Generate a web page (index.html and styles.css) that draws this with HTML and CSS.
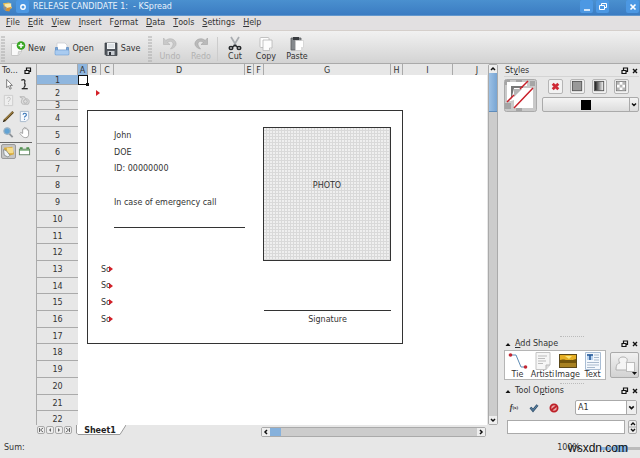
FILE: index.html
```html
<!DOCTYPE html>
<html lang="en">
<head>
    <meta charset="UTF-8">
    <meta name="viewport" content="width=device-width, initial-scale=1.0">
    <title>RELEASE CANDIDATE 1: - KSpread</title>
    <link rel="stylesheet" href="styles.css">
</head>
<body>
    <header class="titlebar">
        <svg class="app-icon" viewBox="0 0 12 12"><path d="M1 2l7-1 3 6-7 3z" fill="#e9bd55"/><path d="M3 3l7-1v5l-6 1z" fill="#f7e9ae"/><path d="M1 5l4 1v5l-3-2z" fill="#8a9096"/><path d="M5 7l5-1-2 5-4-1z" fill="#d9902e"/></svg>
        <button class="win-button" aria-label="Sticky"><svg viewBox="0 0 12 12"><circle cx="6" cy="6" r="2.2" fill="none" stroke="#fff" stroke-width="1.4"/></svg></button>
        <h1 class="window-title">RELEASE CANDIDATE 1:&nbsp; - KSpread</h1>
        <button class="win-button" aria-label="Minimize"><svg viewBox="0 0 12 12"><path d="M3 9h6" stroke="#fff" stroke-width="1.5"/></svg></button>
        <button class="win-button" aria-label="Restore"><svg viewBox="0 0 12 12"><path d="M4.500 4.500v-2h5v4h-2M2.500 4.500h5v4h-5z" fill="none" stroke="#fff"/></svg></button>
        <button class="win-button close" aria-label="Close"><svg viewBox="0 0 12 12"><path d="M3.500 3.500l5 5M8.500 3.500l-5 5" stroke="#fff" stroke-width="1.700"/></svg></button>
    </header>

    <nav class="menubar">
        <button><u>F</u>ile</button>
        <button><u>E</u>dit</button>
        <button><u>V</u>iew</button>
        <button><u>I</u>nsert</button>
        <button>F<u>o</u>rmat</button>
        <button><u>D</u>ata</button>
        <button><u>T</u>ools</button>
        <button><u>S</u>ettings</button>
        <button><u>H</u>elp</button>
    </nav>

    <div class="toolbar">
        <span class="grip"></span>
        <div class="file-tools">
            <button><svg viewBox="0 0 16 16"><path d="M1.500 2.500h10v8l-3 4h-7z" fill="#fafafa" stroke="#c8c8c8"/><path d="M8 14l.5-3.500H12" fill="#ddd" stroke="#bbb" stroke-width=".6"/><circle cx="11" cy="4.500" r="4.300" fill="#35a520"/><path d="M11 2v5M8.500 4.500h5" stroke="#fff" stroke-width="1.500"/></svg>New</button>
            <button><svg viewBox="0 0 16 16"><path d="M3 2h8l2 2v5H3z" fill="#fff" stroke="#c5c9cf" stroke-width=".7"/><path d="M1.500 6.500h2v3h9v-3h2v7h-13z" fill="#77a7dc" stroke="#5585bd" stroke-width=".7"/><rect x="1" y="9" width="14" height="5" rx="1" fill="#a9cbf0" stroke="#6f9fd5" stroke-width=".6"/></svg>Open</button>
            <button><svg viewBox="0 0 16 16"><path d="M2 2h12v12.500H3L2 13.500z" fill="#51565d" stroke="#353a40" stroke-width=".7"/><rect x="4" y="2" width="8" height="6" fill="#f2f4f6"/><path d="M5 4h6M5 6h6" stroke="#b8bec5" stroke-width=".7"/><rect x="4.500" y="10" width="7" height="4" fill="#c9cdd2"/><rect x="6" y="11" width="2" height="3" fill="#30343a"/></svg>Save</button>
        </div>
        <span class="grip"></span>
        <div class="edit-tools">
            <button disabled><svg viewBox="0 0 16 16"><path d="M1.500 2v6.500H8L5.500 6.500c3-2.500 6-.5 5.500 2-.3 2-1.500 3-2.500 4.500 4-1 6-3.500 5.500-6C13 2.500 7 1.500 3.800 4.500z" fill="#c9c9c9" stroke="#b3b3b3" stroke-width=".6"/></svg>Undo</button>
            <button disabled><svg viewBox="0 0 16 16"><path d="M14.500 2v6.500H8l2.500-2C7.500 4 4.500 6 5 8.500c.3 2 1.500 3 2.500 4.500C3.500 12 1.500 9.500 2 7c1-4.500 7-5.500 10.200-2.500z" fill="#bababa" stroke="#a3a3a3" stroke-width=".6"/></svg>Redo</button>
            <span class="divider"></span>
            <button><svg viewBox="0 0 16 16"><path d="M4 1l5.500 9M12 1L6.500 10" stroke="#a8acb0" stroke-width="1.700"/><g fill="none" stroke="#24272a" stroke-width="1.500"><ellipse cx="4" cy="12" rx="1.800" ry="1.500"/><ellipse cx="12" cy="12" rx="1.800" ry="1.500"/><path d="M5.500 11L8 9.200l2.500 1.800"/></g></svg>Cut</button>
            <button><svg viewBox="0 0 16 16" fill="#fdfdfd" stroke="#b5b5b5" stroke-width=".8"><rect x="2" y="1.500" width="9" height="10" rx="1"/><path d="M5 4h9v8l-2.500 2.500H5z"/><path d="M11.500 14.500V12H14"/></svg>Copy</button>
            <button><svg viewBox="0 0 16 16"><path d="M2 2h10v12H2z" fill="#85898d" stroke="#5b5e61" stroke-width=".8"/><path d="M4 1h6v3H4z" fill="#393c40"/><path d="M6.500 4.500h8V11L12 14.500H6.500z" fill="#fff" stroke="#ccc" stroke-width=".7"/><path d="M12 14.500V11h2.500" fill="#ddd"/></svg>Paste</button>
        </div>
    </div>

    <main class="workspace">
        <aside class="toolbox">
            <div class="dock-title"><h2>To...</h2><svg viewBox="0 0 8 8"><path d="M2.500 3V1h4v3.500H5M1 3.500h4v3H1z" fill="none" stroke="#111" stroke-width="1.200"/></svg></div>
            <div class="tools">
                <button aria-label="Select"><svg viewBox="0 0 14 14"><path d="M5 1.500v9l2-2 1.500 3.500 1.500-.7L8.500 8h2.700z" fill="#fff" stroke="#777"/></svg></button>
                <button aria-label="Path"><svg viewBox="0 0 14 14"><path d="M3.500 2.500c3-1.500 5-.5 3.500 2.500M7 5c1 2 1 4-1 5.500" fill="none" stroke="#222" stroke-width="1.300"/><path d="M4 11.500h6.500" stroke="#222" stroke-width="1.400"/></svg></button>
                <button aria-label="Help tool" disabled><svg viewBox="0 0 14 14"><path d="M2.500 1.500h9v11h-9z" fill="#eee" stroke="#ccc"/><path d="M5.500 5c0-2 3.500-2 3.500 0S7 6.500 7 8.500M7 10v1" fill="none" stroke="#bbb"/></svg></button>
                <button aria-label="Rotate" disabled><svg viewBox="0 0 14 14" fill="#ddd" stroke="#b2b2b2"><path d="M2 3h5l1 2c4 0 5 3 3 6H6c-3 0-3-4-1-6z"/><circle cx="8" cy="8" r="2"/></svg></button>
                <button aria-label="Pencil"><svg viewBox="0 0 14 14"><path d="M2 12L12 2" stroke="#594218" stroke-width="2.500"/><path d="M3 10.500l8.500-8.500" stroke="#cfae62"/><path d="M1 13l2-2" stroke="#222"/></svg></button>
                <button aria-label="Unknown tool"><svg viewBox="0 0 14 14"><path d="M2.500 1.500h9v8l-3 3h-6z" fill="#f5f9fe" stroke="#a5b7ca"/><path d="M5.500 5c0-2 3.500-2 3.500 0S7 6.500 7 8M7 9.500v1" fill="none" stroke="#3271b5" stroke-width="1.200"/></svg></button>
                <button aria-label="Zoom"><svg viewBox="0 0 14 14"><path d="M7.500 8l4 4" stroke="#8f9499" stroke-width="2"/><circle cx="5.500" cy="5.500" r="3.500" fill="#62a3d4" stroke="#9db2c2" stroke-width="1.300"/></svg></button>
                <button aria-label="Pan"><svg viewBox="0 0 14 14"><path d="M3 7l2 1V3.500c1-1 1.500 0 1.500 0V2c1-1 1.700 0 1.700 0v1c1-1 1.700 0 1.700 0v1.500c1-.6 1.500 0 1.500 0V9c0 2-1 3.500-3 3.500S5 12 2 8z" fill="#fff" stroke="#888" stroke-width=".8"/></svg></button>
            </div>
            <div class="tools cell-tools">
                <button class="active" aria-label="Cell tool"><svg viewBox="0 0 14 14"><path d="M2 3l9-1 2 8-8 2z" fill="#d6a936"/><path d="M5 3h7v6H6z" fill="#f5dc8a"/><path d="M1.500 5l3 1 4 5-2 2-4-2z" fill="#eef2f5" stroke="#6b7376" stroke-width=".7"/></svg></button>
                <button aria-label="Table"><svg viewBox="0 0 14 14"><path d="M2 3.500h3M9 3.500h3" stroke="#4b9349" stroke-width="2"/><rect x="1.500" y="4.500" width="11" height="6" fill="#fff" stroke="#648365"/><path d="M1.500 5.500h11" stroke="#4b9349"/></svg></button>
            </div>
        </aside>

        <section class="document">
            <div class="sheet-row">
                <div class="sheet-view">
                    <table class="sheet">
                        <colgroup>
                            <col class="col-head"><col class="col-a"><col class="col-b"><col class="col-b"><col class="col-d"><col class="col-e"><col class="col-a"><col class="col-g"><col class="col-h"><col class="col-i"><col>
                        </colgroup>
                        <thead>
                            <tr><th></th><th class="current">A</th><th>B</th><th>C</th><th>D</th><th>E</th><th>F</th><th>G</th><th>H</th><th>I</th><th class="col-j">J</th></tr>
                        </thead>
                        <tbody>
                            <tr class="first"><th class="current">1</th><td class="cursor"></td><td colspan="9"></td></tr>
                            <tr class="short"><th>2</th><td></td><td class="more"></td><td colspan="8"></td></tr>
                            <tr class="tiny"><th>3</th><td colspan="10"></td></tr>
                            <tr><th>4</th><td class="line-right"></td><td colspan="7" class="line-top line-right"></td><td colspan="2"></td></tr>
                            <tr><th>5</th><td class="line-right"></td><td colspan="2"></td><td>John</td><td></td><td class="line-right"></td><td rowspan="8" class="photo">PHOTO</td><td class="line-right"></td><td colspan="2"></td></tr>
                            <tr><th>6</th><td class="line-right"></td><td colspan="2"></td><td>DOE</td><td></td><td class="line-right"></td><td class="line-right"></td><td colspan="2"></td></tr>
                            <tr class="short"><th>7</th><td class="line-right"></td><td colspan="2"></td><td>ID: 00000000</td><td></td><td class="line-right"></td><td class="line-right"></td><td colspan="2"></td></tr>
                            <tr><th>8</th><td class="line-right"></td><td colspan="4"></td><td class="line-right"></td><td class="line-right"></td><td colspan="2"></td></tr>
                            <tr><th>9</th><td class="line-right"></td><td colspan="2"></td><td>In case of emergency call</td><td></td><td class="line-right"></td><td class="line-right"></td><td colspan="2"></td></tr>
                            <tr><th>10</th><td class="line-right"></td><td colspan="2"></td><td class="line-bottom"></td><td></td><td class="line-right"></td><td class="line-right"></td><td colspan="2"></td></tr>
                            <tr class="short"><th>11</th><td class="line-right"></td><td colspan="4"></td><td class="line-right"></td><td class="line-right"></td><td colspan="2"></td></tr>
                            <tr><th>12</th><td class="line-right"></td><td colspan="4"></td><td class="line-right"></td><td class="line-right"></td><td colspan="2"></td></tr>
                            <tr><th>13</th><td class="line-right"></td><td></td><td class="more">So</td><td colspan="5" class="line-right"></td><td colspan="2"></td></tr>
                            <tr class="short"><th>14</th><td class="line-right"></td><td></td><td class="more">So</td><td colspan="5" class="line-right"></td><td colspan="2"></td></tr>
                            <tr><th>15</th><td class="line-right"></td><td></td><td class="more">So</td><td colspan="3"></td><td class="line-bottom"></td><td class="line-right"></td><td colspan="2"></td></tr>
                            <tr><th>16</th><td class="line-right"></td><td></td><td class="more">So</td><td colspan="3"></td><td class="signature">Signature</td><td class="line-right"></td><td colspan="2"></td></tr>
                            <tr class="short"><th>17</th><td class="line-right"></td><td colspan="7" class="line-bottom line-right"></td><td colspan="2"></td></tr>
                            <tr><th>18</th><td colspan="10"></td></tr>
                            <tr><th>19</th><td colspan="10"></td></tr>
                            <tr><th>20</th><td colspan="10"></td></tr>
                            <tr class="short"><th>21</th><td colspan="10"></td></tr>
                            <tr><th>22</th><td colspan="10"></td></tr>
                        </tbody>
                    </table>
                </div>
                <div class="scrollbar vertical">
                    <button aria-label="Scroll up"><svg viewBox="0 0 8 8"><path d="M2 5l2-2 2 2" fill="none" stroke="#111" stroke-width="1.500"/></svg></button>
                    <div class="track"><div class="thumb"></div></div>
                    <button aria-label="Scroll down"><svg viewBox="0 0 8 8"><path d="M2 3l2 2 2-2" fill="none" stroke="#111" stroke-width="1.500"/></svg></button>
                </div>
            </div>
            <div class="tab-row">
                <div class="tab-nav">
                    <button aria-label="First sheet"><svg viewBox="0 0 8 8"><path d="M2.500 2v4M6 2L3.500 4 6 6" fill="none" stroke="#666"/></svg></button>
                    <button aria-label="Previous sheet"><svg viewBox="0 0 8 8"><path d="M5 2L3 4l2 2z" fill="#666"/></svg></button>
                    <button aria-label="Next sheet"><svg viewBox="0 0 8 8"><path d="M3 2l2 2-2 2z" fill="#666"/></svg></button>
                    <button aria-label="Last sheet"><svg viewBox="0 0 8 8"><path d="M5.500 2v4M2 2l2.500 2L2 6" fill="none" stroke="#666"/></svg></button>
                </div>
                <button class="sheet-tab"><svg viewBox="0 0 50 12" preserveAspectRatio="none"><path d="M0 0h50l-6 9.500H2L.5 8z" fill="#fff"/><path d="M.5 0v8L2 9.500h42L50 0" fill="none" stroke="#999"/></svg><span>Sheet1</span></button>
                <div class="scrollbar horizontal">
                    <button aria-label="Scroll left"><svg viewBox="0 0 8 8"><path d="M5 2L3 4l2 2" fill="none" stroke="#111" stroke-width="1.500"/></svg></button>
                    <div class="track"><div class="thumb"></div></div>
                    <button aria-label="Scroll right"><svg viewBox="0 0 8 8"><path d="M3 2l2 2-2 2" fill="none" stroke="#111" stroke-width="1.500"/></svg></button>
                </div>
            </div>
        </section>

        <aside class="docks">
            <section class="styles-dock">
                <div class="dock-title"><h2>St<u>y</u>les</h2><svg viewBox="0 0 8 8"><path d="M2.500 3V1h4v3.500H5M1 3.500h4v3H1z" fill="none" stroke="#111" stroke-width="1.200"/></svg><svg viewBox="0 0 8 8"><path d="M2 2l4 4M6 2L2 6" stroke="#111" stroke-width="1.400"/></svg></div>
                <div class="style-body">
                    <svg class="swatch" viewBox="0 0 33 33"><rect x=".5" y=".5" width="32" height="32" rx="2" fill="#c9c9c9" stroke="#aaa"/><path d="M1 1h5v5H1zM12 1h6v3h-6zM1 24h6v6H1zM26 2h5v5h-5zM12 29h6v3h-6z" fill="#a5a5a5"/><path d="M3 3h20v4H7v15H3z" fill="#fff"/><path d="M7 7h12v3h-9v9H7z" fill="#777"/><path d="M10 9h19v20H10v-8l-3 1z" fill="#fff"/><path d="M10 10h8l-8 8z" fill="#b5b5b5"/><path d="M3 23l7-7M16 10l8-8M10 29L29 9" stroke="#c9202a" stroke-width="1.500"/></svg>
                    <div class="style-controls">
                        <div class="fill-buttons">
                            <button aria-label="No fill"><svg viewBox="0 0 14 14"><path d="M4 4l6 6M10 4l-6 6" stroke="#cf2935" stroke-width="3"/></svg></button>
                            <button aria-label="Solid fill"><svg viewBox="0 0 14 14"><rect x="1.500" y="1.500" width="10" height="10" fill="#999" stroke="#555"/></svg></button>
                            <button aria-label="Gradient"><svg viewBox="0 0 14 14"><defs><linearGradient id="fade"><stop offset="0" stop-color="#111"/><stop offset="1" stop-color="#fff"/></linearGradient></defs><rect x="1.500" y="1.500" width="10" height="10" fill="url(#fade)" stroke="#555"/></svg></button>
                            <button aria-label="Pattern"><svg viewBox="0 0 14 14"><rect x="1.500" y="1.500" width="10" height="10" fill="#fff" stroke="#777"/><path d="M2 2h3v3H2zM8 2h3v3H8zM5 5h3v3H5zM2 8h3v3H2zM8 8h3v3H8z" fill="#b5b5b5"/></svg></button>
                        </div>
                        <button class="color-combo" aria-label="Colour"><span class="color"></span><svg viewBox="0 0 8 8"><path d="M2 3l2 2 2-2" fill="none" stroke="#111" stroke-width="1.400"/></svg></button>
                    </div>
                </div>
            </section>

            <div class="lower-docks">
                <span class="splitter"></span>
                <section>
                    <div class="dock-title"><svg viewBox="0 0 8 8"><path d="M1.500 6h5L4 3z" fill="#111"/></svg><h2><u>A</u>dd Shape</h2><svg viewBox="0 0 8 8"><path d="M2.500 3V1h4v3.500H5M1 3.500h4v3H1z" fill="none" stroke="#111" stroke-width="1.200"/></svg><svg viewBox="0 0 8 8"><path d="M2 2l4 4M6 2L2 6" stroke="#111" stroke-width="1.400"/></svg></div>
                    <div class="shape-body">
                        <div class="shapes">
                            <button><svg viewBox="0 0 20 18"><path d="M2 3h6l5 12h5" fill="none" stroke="#5c8bb5"/><circle cx="2.500" cy="3" r="1.800" fill="#c32733"/><circle cx="17.500" cy="15" r="1.800" fill="#c32733"/></svg><span>Tie</span></button>
                            <button><svg viewBox="0 0 20 18"><path d="M3 .5h14V13l-4 4.500H3z" fill="#f6f6f6" stroke="#c4c4c4"/><path d="M5 4h9M5 6.500h7M5 9h8M5 11.500h5" stroke="#bbb"/><path d="M13 17.500V13h4" fill="#ddd" stroke="#bbb"/></svg><span>Artisti</span></button>
                            <button><svg viewBox="0 0 20 18"><path d="M1 2h18v14H1z" fill="#5b4818"/><path d="M2 3h16v5H2z" fill="#e6af24"/><path d="M2 8c4-2 8 2 16-1v4H2z" fill="#72540b"/><path d="M2 11h16v4H2z" fill="#a88121"/><path d="M7 4h7l-3 3z" fill="#fce679"/></svg><span>Image</span></button>
                            <button><svg viewBox="0 0 20 18"><path d="M2.500.5h15v17h-15z" fill="#f4f8fd" stroke="#a9bdd4"/><path d="M4 2h6v6H4z" fill="#b8d2f0"/><path d="M4 3h6M7 3v5" stroke="#205595" stroke-width="1.500"/><path d="M11 3h5M11 5.500h5M11 8h5M4 10.500h12M4 13h12M4 15.500h8" stroke="#a8b9cd"/></svg><span>Text</span></button>
                        </div>
                        <button class="shape-more" aria-label="More shapes"><svg viewBox="0 0 28 26"><path d="M5 18c0-6 2-7 4-7-6-8 12-8 6 0 3 1 4 2 4 7z" fill="#f4f4f4" stroke="#b0b0b0"/><rect x="15.500" y="10.500" width="8" height="9" fill="#fafafa" stroke="#bbb"/><path d="M21 20h5l-2.500 3z" fill="#111"/></svg></button>
                    </div>
                </section>
                <span class="splitter"></span>
                <section>
                    <div class="dock-title"><svg viewBox="0 0 8 8"><path d="M1.500 6h5L4 3z" fill="#111"/></svg><h2>Tool O<u>p</u>tions</h2><svg viewBox="0 0 8 8"><path d="M2.500 3V1h4v3.500H5M1 3.500h4v3H1z" fill="none" stroke="#111" stroke-width="1.200"/></svg><svg viewBox="0 0 8 8"><path d="M2 2l4 4M6 2L2 6" stroke="#111" stroke-width="1.400"/></svg></div>
                    <div class="option-row">
                        <button class="formula" aria-label="Formula"><i>f</i><small>(x)</small></button>
                        <button aria-label="Apply"><svg viewBox="0 0 10 10"><path d="M1.500 4.500l2.500 3L8.500 2" fill="none" stroke="#36546f" stroke-width="2.600"/><path d="M1.500 4.500l2.500 3L8.500 2" fill="none" stroke="#5c87aa"/></svg></button>
                        <button aria-label="Cancel"><svg viewBox="0 0 10 10"><circle cx="5" cy="5" r="3.600" fill="#e9a6a6" stroke="#bd2028" stroke-width="1.800"/><path d="M2.500 7l5-4" stroke="#bd2028" stroke-width="1.700"/></svg></button>
                        <div class="cell-combo">
                            <select aria-label="Cell"><option>A1</option></select>
                            <svg viewBox="0 0 8 8"><path d="M2 3l2 2 2-2" fill="none" stroke="#111" stroke-width="1.400"/></svg>
                        </div>
                    </div>
                    <div class="formula-row">
                        <input type="text" aria-label="Formula text">
                        <button aria-label="Step"><svg viewBox="0 0 8 14"><path d="M2 5l2-2 2 2M2 9l2 2 2-2" fill="none" stroke="#111" stroke-width="1.400"/><path d="M0 7h8" stroke="#aaa"/></svg></button>
                    </div>
                </section>
            </div>
        </aside>
    </main>

    <footer class="statusbar">
        <span class="sum">Sum:</span>
        <label for="zoom">100%</label>
        <input id="zoom" type="range" min="0" max="100" value="55">
        <span class="watermark">wsxdn.com</span>
    </footer>
</body>
</html>
```
FILE: styles.css
```css
* {
    box-sizing: border-box;
}
body {
    display: flex;
    flex-direction: column;
    height: 100vh;
    margin: 0;
    overflow: hidden;
    background: #e7e7e7;
    color: #333;
    font: 8px/10px "DejaVu Sans", sans-serif;
}
button {
    display: flex;
    align-items: center;
    justify-content: center;
    padding: 0;
    border: 0;
    background: none;
    color: inherit;
    font: inherit;
}
svg {
    display: block;
    flex: none;
}
h1, h2 {
    margin: 0;
    font-size: 8px;
    font-weight: normal;
}

/* title and menus */
.titlebar {
    display: flex;
    align-items: center;
    flex: none;
    gap: 3px;
    height: 16px;
    padding: 0 1px 2px 2px;
    background: linear-gradient(#4a90cf, #3b7cc2);
    border-bottom: 1px solid #6398cd;
    color: #fff;
}
.app-icon {
    width: 11px;
    height: 12px;
}
.win-button {
    width: 13px;
    height: 13px;
    border-radius: 2px;
    background: #4c98e3;
}
.win-button svg {
    width: 12px;
    height: 12px;
}
.win-button.close {
    margin-left: 14px;
}
.window-title {
    flex: 1;
    padding-left: 1px;
    color: #e8f2fb;
}
.menubar {
    display: flex;
    flex: none;
    gap: 8px;
    height: 15px;
    padding-left: 6px;
    background: #e2e0e1;
    border-bottom: 1px solid #d5cfcb;
}
.toolbar {
    display: flex;
    align-items: center;
    flex: none;
    height: 33px;
    padding: 3px 0 0 1px;
    background: linear-gradient(#f1f1f1, #d3d3d3);
    border-bottom: 1px solid #aaa;
}
.grip {
    width: 4px;
    height: 26px;
    background: radial-gradient(circle at 1px 1px, #aaa 1px, transparent 1px) 0 0 / 2px 3px;
    opacity: 0.5;
}
.file-tools, .edit-tools {
    display: flex;
    align-items: center;
}
.file-tools {
    gap: 9px;
    padding: 0 8px 0 5px;
}
.file-tools button {
    gap: 2px;
}
.toolbar svg {
    width: 16px;
    height: 16px;
}
.edit-tools {
    gap: 4px;
    padding-left: 4px;
}
.edit-tools button {
    flex-direction: column;
    width: 27px;
}
.toolbar button:disabled {
    color: #b2b2b2;
}
.divider {
    width: 1px;
    height: 24px;
    margin: 0 -1px;
    background: #ccc;
}

/* tools on the left */
.workspace {
    display: flex;
    flex: 1;
    min-height: 0;
}
.toolbox {
    flex: none;
    width: 36px;
    padding-top: 1px;
}
.dock-title {
    display: flex;
    align-items: center;
    gap: 2px;
    height: 11px;
}
.dock-title h2 {
    flex: 1;
}
.dock-title svg {
    width: 8px;
    height: 8px;
}
.toolbox .dock-title {
    width: 32px;
    padding-left: 2px;
}
.tools {
    display: grid;
    grid-template-columns: 15px 15px;
    gap: 1px;
    width: 32px;
    padding: 1px 0 2px 1px;
}
.tools button {
    height: 15px;
}
.tools svg {
    width: 13px;
    height: 13px;
}
.cell-tools {
    border-top: 1px solid #666;
}
.tools .active {
    border: 1px solid #999;
    border-radius: 2px;
    background: #c5c5c5;
}

/* spreadsheet */
.document {
    display: flex;
    flex-direction: column;
    flex: 1;
    min-width: 0;
}
.sheet-row {
    display: flex;
    flex: 1;
    min-height: 0;
}
.sheet-view {
    flex: 1;
    min-width: 0;
    overflow: hidden;
    background: #fff;
    border-left: 1px solid #aaa;
}
.sheet {
    width: 100%;
    table-layout: fixed;
    border-spacing: 0;
    line-height: 8px;
}
.col-head { width: 41px; }
.col-a { width: 10px; }
.col-b { width: 13px; }
.col-d { width: 131px; }
.col-e { width: 9px; }
.col-g { width: 127px; }
.col-h { width: 12px; }
.col-i { width: 50px; }
.sheet tr {
    height: 17px;
}
.sheet .short {
    height: 16px;
}
.sheet .first {
    height: 10px;
}
.sheet .tiny {
    height: 9px;
}
.sheet thead tr {
    height: 11px;
}
.sheet th {
    padding: 1px 0 0;
    background: #e7e7e7;
    border-bottom: 1px solid #aaa;
    font-weight: normal;
    line-height: 7px;
}
.sheet thead th {
    border-right: 1px solid #aaa;
    border-bottom: 0;
}
.sheet thead .col-j {
    padding-left: 14px;
    border-right: 0;
}
.sheet th.current {
    background: #8fb6de;
}
.sheet td {
    position: relative;
    padding: 0;
    white-space: nowrap;
}
.sheet .cursor {
    border: 1px solid #111;
}
.sheet .cursor::after {
    content: "";
    position: absolute;
    right: -2px;
    bottom: -2px;
    width: 3px;
    height: 3px;
    background: #111;
}
.more::after {
    content: "";
    position: absolute;
    top: 5px;
    right: 1px;
    border: 3px solid transparent;
    border-left: 4px solid #d42027;
    border-right: 0;
}
.line-top { border-top: 1px solid #333; }
.line-right { border-right: 1px solid #333; }
.line-bottom { border-bottom: 1px solid #333; }
.sheet .photo {
    padding-bottom: 16px;
    border: 1px solid #333;
    border-left: 0;
    background: radial-gradient(circle at 1px 1px, #efefef 1px, transparent 1px) 0 0 / 3px 3px #d9d9d9;
    text-align: center;
}
.signature {
    text-align: center;
}

/* scroll bars and sheet tabs */
.scrollbar {
    display: flex;
    flex: none;
    border: 1px solid #aaa;
    border-radius: 2px;
    background: #ccc;
}
.scrollbar button {
    flex: none;
    width: 8px;
    height: 8px;
    background: #eee;
}
.scrollbar svg {
    width: 8px;
    height: 8px;
}
.scrollbar .track {
    flex: 1;
}
.scrollbar .thumb {
    background: #86b1dc;
}
.vertical {
    flex-direction: column;
    width: 10px;
    margin-left: 1px;
}
.vertical .thumb {
    height: 39px;
    background: linear-gradient(90deg, #9bc0e5, #78a5d3);
    border-bottom: 1px solid #5e8cbb;
}
.horizontal {
    width: 225px;
    height: 10px;
    margin: 2px 12px 0 auto;
}
.horizontal .thumb {
    width: 11px;
    height: 8px;
}
.tab-row {
    display: flex;
    flex: none;
    height: 13px;
}
.tab-nav {
    display: flex;
    gap: 1px;
    padding: 1px 4px 0 1px;
}
.tab-nav button {
    width: 8px;
    height: 8px;
    border: 1px solid #aaa;
    border-radius: 2px;
    background: #eee;
}
.tab-nav svg {
    width: 8px;
    height: 8px;
}
.sheet-tab {
    position: relative;
    width: 50px;
    height: 12px;
    font-weight: bold;
    color: #222;
}
.sheet-tab svg {
    position: absolute;
    inset: 0;
    width: 50px;
    height: 12px;
}
.sheet-tab span {
    position: relative;
    padding-right: 2px;
}

/* docks on the right */
.docks {
    display: flex;
    flex-direction: column;
    justify-content: space-between;
    flex: none;
    width: 142px;
    padding: 2px 1px 4px 6px;
}
.styles-dock .dock-title {
    padding-left: 1px;
    border-bottom: 1px solid #d4d4d4;
}
.style-body {
    display: flex;
    gap: 5px;
    padding-top: 2px;
}
.swatch {
    width: 33px;
    height: 33px;
}
.style-controls {
    flex: 1;
}
.fill-buttons {
    display: flex;
    gap: 7px;
    padding-left: 6px;
    margin-bottom: 3px;
}
.fill-buttons button {
    width: 15px;
    height: 15px;
    border: 1px solid #b5b5b5;
    border-radius: 2px;
    background: #f2f2f2;
}
.fill-buttons svg {
    width: 13px;
    height: 13px;
}
.color-combo {
    width: 100%;
    height: 15px;
    border: 1px solid #aaa;
    border-radius: 2px;
    background: linear-gradient(#f4f4f4, #ddd);
}
.color {
    width: 10px;
    height: 10px;
    margin: 0 auto;
    background: #000;
}
.color-combo svg {
    width: 9px;
    height: 13px;
    border-left: 1px solid #aaa;
}
.splitter {
    display: block;
    width: 24px;
    height: 2px;
    margin: 0 auto;
    border-top: 1px dotted #bbb;
}
.lower-docks .dock-title svg:first-child {
    margin-right: 1px;
}
.shape-body {
    display: flex;
    align-items: center;
    gap: 4px;
    padding-top: 1px;
    margin-bottom: 3px;
}
.shapes {
    display: flex;
    flex: 1;
    min-width: 0;
    height: 30px;
    border: 1px solid #b5b5b5;
    background: #fff;
}
.shapes button {
    flex-direction: column;
    justify-content: flex-start;
    flex: 1;
    min-width: 0;
    padding-top: 1px;
}
.shapes svg {
    width: 20px;
    height: 18px;
}
.shape-more {
    width: 29px;
    height: 26px;
    border: 1px solid #aaa;
    border-radius: 2px;
    background: linear-gradient(#f1f1f1, #d2d2d2);
}
.shape-more svg {
    width: 28px;
    height: 26px;
}
.option-row {
    display: flex;
    align-items: center;
    gap: 8px;
    padding: 4px 2px 5px 4px;
}
.option-row button {
    width: 12px;
    height: 12px;
}
.option-row button svg {
    width: 10px;
    height: 10px;
}
.option-row .formula {
    font-family: "Liberation Serif", serif;
    font-weight: bold;
}
.formula small {
    font-size: 5px;
}
.cell-combo {
    display: flex;
    align-items: center;
    width: 62px;
    height: 15px;
    margin-left: auto;
    border: 1px solid #aaa;
    border-radius: 2px;
    background: #fff;
}
.cell-combo select {
    flex: 1;
    min-width: 0;
    height: 13px;
    padding: 0 2px;
    border: 0;
    appearance: none;
    background: none;
    color: inherit;
    font: inherit;
}
.cell-combo svg {
    width: 10px;
    height: 13px;
    border-left: 1px solid #aaa;
    background: #eee;
}
.formula-row {
    display: flex;
    gap: 3px;
    padding: 0 2px 0 3px;
}
.formula-row input {
    flex: 1;
    min-width: 0;
    height: 14px;
    padding: 0 2px;
    border: 1px solid #aaa;
    font: inherit;
}
.formula-row button {
    width: 9px;
    height: 14px;
    border: 1px solid #aaa;
    border-radius: 2px;
    background: #eee;
}
.formula-row svg {
    width: 8px;
    height: 14px;
}

/* status bar */
.statusbar {
    position: relative;
    display: flex;
    align-items: center;
    flex: none;
    height: 20px;
    padding-left: 4px;
}
.sum {
    flex: 1;
}
.statusbar label {
    padding-right: 20px;
}
.statusbar input {
    width: 40px;
    height: 8px;
    margin: 0;
    appearance: none;
    background: linear-gradient(90deg, #8cb3db 50%, #bbb 50%) center / 100% 3px no-repeat;
}
.statusbar input::-webkit-slider-thumb {
    appearance: none;
    width: 14px;
    height: 7px;
    border: 1px solid #6e9fcd;
    border-radius: 3px;
    background: #86b5e3;
}
.watermark {
    position: absolute;
    right: 12px;
    font: 12px/16px "Liberation Sans", sans-serif;
    color: #111;
}
```
